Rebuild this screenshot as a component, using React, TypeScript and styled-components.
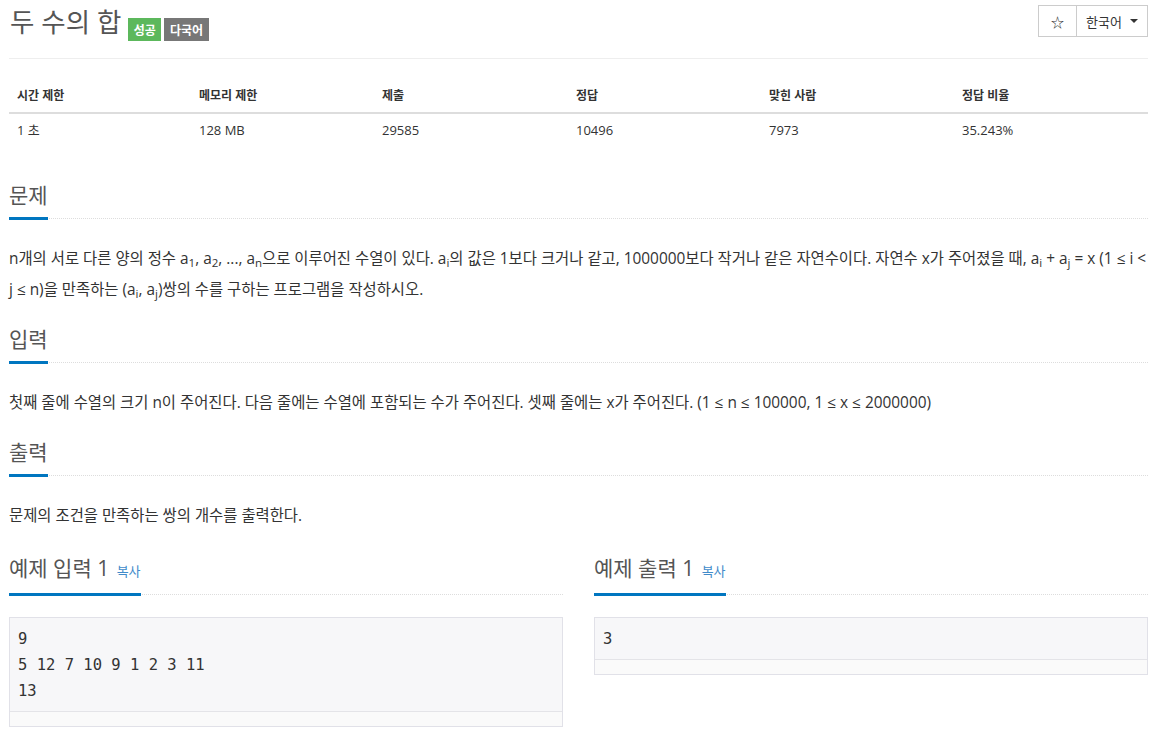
import React from "react";
import styled, { createGlobalStyle } from "styled-components";

const GlobalStyle = createGlobalStyle`
  body {
    margin: 0;
    background: #fff;
    font-family: "Open Sans", "Noto Sans CJK KR", sans-serif;
    color: #333;
  }
`;

const limits = [
  { label: "시간 제한", value: "1 초" },
  { label: "메모리 제한", value: "128 MB" },
  { label: "제출", value: "29585" },
  { label: "정답", value: "10496" },
  { label: "맞힌 사람", value: "7973" },
  { label: "정답 비율", value: "35.243%" },
];

function App() {
  return (
    <Page>
      <GlobalStyle />
      <TitleBar>
        <TitleGroup>
          <Title>두 수의 합</Title>
          <Badge tone="#5cb85c">성공</Badge>
          <Badge tone="#777">다국어</Badge>
        </TitleGroup>
        <ButtonGroup>
          <GroupButton width={39}>☆</GroupButton>
          <GroupButton width={72}>
            한국어 <Caret />
          </GroupButton>
        </ButtonGroup>
      </TitleBar>

      <InfoTable>
        {limits.map((c) => (
          <HeadCell key={c.label}>{c.label}</HeadCell>
        ))}
        {limits.map((c) => (
          <BodyCell key={c.label}>{c.value}</BodyCell>
        ))}
      </InfoTable>

      <Section gap={36.5}>
        <Headline>
          <Heading>문제</Heading>
        </Headline>
        <Text>
          n개의 서로 다른 양의 정수 a<sub>1</sub>, a<sub>2</sub>, ..., a
          <sub>n</sub>으로 이루어진 수열이 있다. a<sub>i</sub>의 값은 1보다
          크거나 같고, 1000000보다 작거나 같은 자연수이다. 자연수 x가 주어졌을
          때, a<sub>i</sub> + a<sub>j</sub> = x (1 ≤ i &lt; j ≤ n)을 만족하는
          (a<sub>i</sub>, a<sub>j</sub>)쌍의 수를 구하는 프로그램을 작성하시오.
        </Text>
      </Section>

      <Section gap={23}>
        <Headline>
          <Heading>입력</Heading>
        </Headline>
        <Text>
          첫째 줄에 수열의 크기 n이 주어진다. 다음 줄에는 수열에 포함되는 수가
          주어진다. 셋째 줄에는 x가 주어진다. (1 ≤ n ≤ 100000, 1 ≤ x ≤ 2000000)
        </Text>
      </Section>

      <Section gap={23}>
        <Headline>
          <Heading>출력</Heading>
        </Headline>
        <Text>문제의 조건을 만족하는 쌍의 개수를 출력한다.</Text>
      </Section>

      <SampleRow>
        <Sample>
          <Headline>
            <Heading>
              예제 입력 1 <CopyLink>복사</CopyLink>
            </Heading>
          </Headline>
          <CodeBox>
            <Code>{"9\n5 12 7 10 9 1 2 3 11\n13"}</Code>
            <ScrollTrack />
          </CodeBox>
        </Sample>
        <Sample>
          <Headline>
            <Heading>
              예제 출력 1 <CopyLink>복사</CopyLink>
            </Heading>
          </Headline>
          <CodeBox>
            <Code>3</Code>
            <ScrollTrack />
          </CodeBox>
        </Sample>
      </SampleRow>
    </Page>
  );
}

export default App;

const Page = styled.div`
  padding: 0 6px 20px 9px;
`;

const TitleBar = styled.div`
  display: flex;
  justify-content: space-between;
  align-items: flex-start;
  padding-top: 5px;
  height: 53px;
  border-bottom: 1px solid #eee;
`;

const TitleGroup = styled.div`
  display: flex;
  align-items: flex-end;
  gap: 3px;
  padding-left: 1px;
`;

const Title = styled.h1`
  margin: 0 4px 0 0;
  font-size: 26.5px;
  line-height: 35px;
  font-weight: 400;
  color: #555;
`;

const Badge = styled.span<{ tone: string }>`
  display: inline-flex;
  align-items: center;
  height: 23px;
  padding: 0 5.5px;
  margin-bottom: -1px;
  background: ${(p) => p.tone};
  color: #fff;
  font-size: 12px;
  font-weight: 700;
`;

const ButtonGroup = styled.div`
  display: flex;
`;

const GroupButton = styled.button<{ width: number }>`
  display: inline-flex;
  align-items: center;
  justify-content: center;
  gap: 8px;
  width: ${(p) => p.width}px;
  height: 32px;
  padding: 0;
  border: 1px solid #ccc;
  background: #fff;
  color: #333;
  font-family: "Open Sans", "Noto Sans CJK KR", sans-serif;
  font-size: 13px;
  & + & {
    margin-left: -1px;
  }
`;

const Caret = styled.span`
  width: 0;
  height: 0;
  border-left: 4px solid transparent;
  border-right: 4px solid transparent;
  border-top: 4px solid #333;
`;

const InfoTable = styled.div`
  display: grid;
  grid-template-columns: 182px 183px 194px 193px 193px 1fr;
  margin-top: 20px;
`;

const HeadCell = styled.div`
  padding: 8px;
  line-height: 17px;
  font-size: 12px;
  font-weight: 700;
  color: #333;
  border-bottom: 2px solid #ddd;
`;

const BodyCell = styled.div`
  padding: 8px;
  line-height: 17px;
  font-size: 13px;
  color: #333;
`;

const Section = styled.section<{ gap: number }>`
  margin-top: ${(p) => p.gap}px;
`;

const Headline = styled.div`
  border-bottom: 1px dotted #ddd;
`;

const Heading = styled.h2`
  display: inline-block;
  margin: 0 0 -2px;
  padding-bottom: 11px;
  border-bottom: 3px solid #0076c0;
  font-size: 21px;
  line-height: 22px;
  font-weight: 400;
  color: #555;
`;

const CopyLink = styled.span`
  margin-left: 2px;
  font-size: 13px;
  color: #428bca;
`;

const Text = styled.p`
  margin: 24px 0 0;
  font-size: 15.4px;
  line-height: 31px;
  color: #333;

  sub {
    font-size: 75%;
    line-height: 0;
    vertical-align: -0.3em;
  }
`;

const SampleRow = styled.div`
  display: grid;
  grid-template-columns: 1fr 1fr;
  gap: 31px;
  margin-top: 26.5px;
`;

const Sample = styled.div`
  display: flex;
  flex-direction: column;
`;

const CodeBox = styled.div`
  margin-top: 22px;
  border: 1px solid #e1e1e8;
  background: #f7f7f9;
`;

const Code = styled.pre`
  margin: 0;
  padding: 8px 8px 7px;
  font-family: "DejaVu Sans Mono", monospace;
  font-size: 15.5px;
  line-height: 26px;
  color: #333;
  white-space: pre;
`;

const ScrollTrack = styled.div`
  height: 14px;
  border-top: 1px solid #e4e4e8;
  background: #fafafa;
`;
